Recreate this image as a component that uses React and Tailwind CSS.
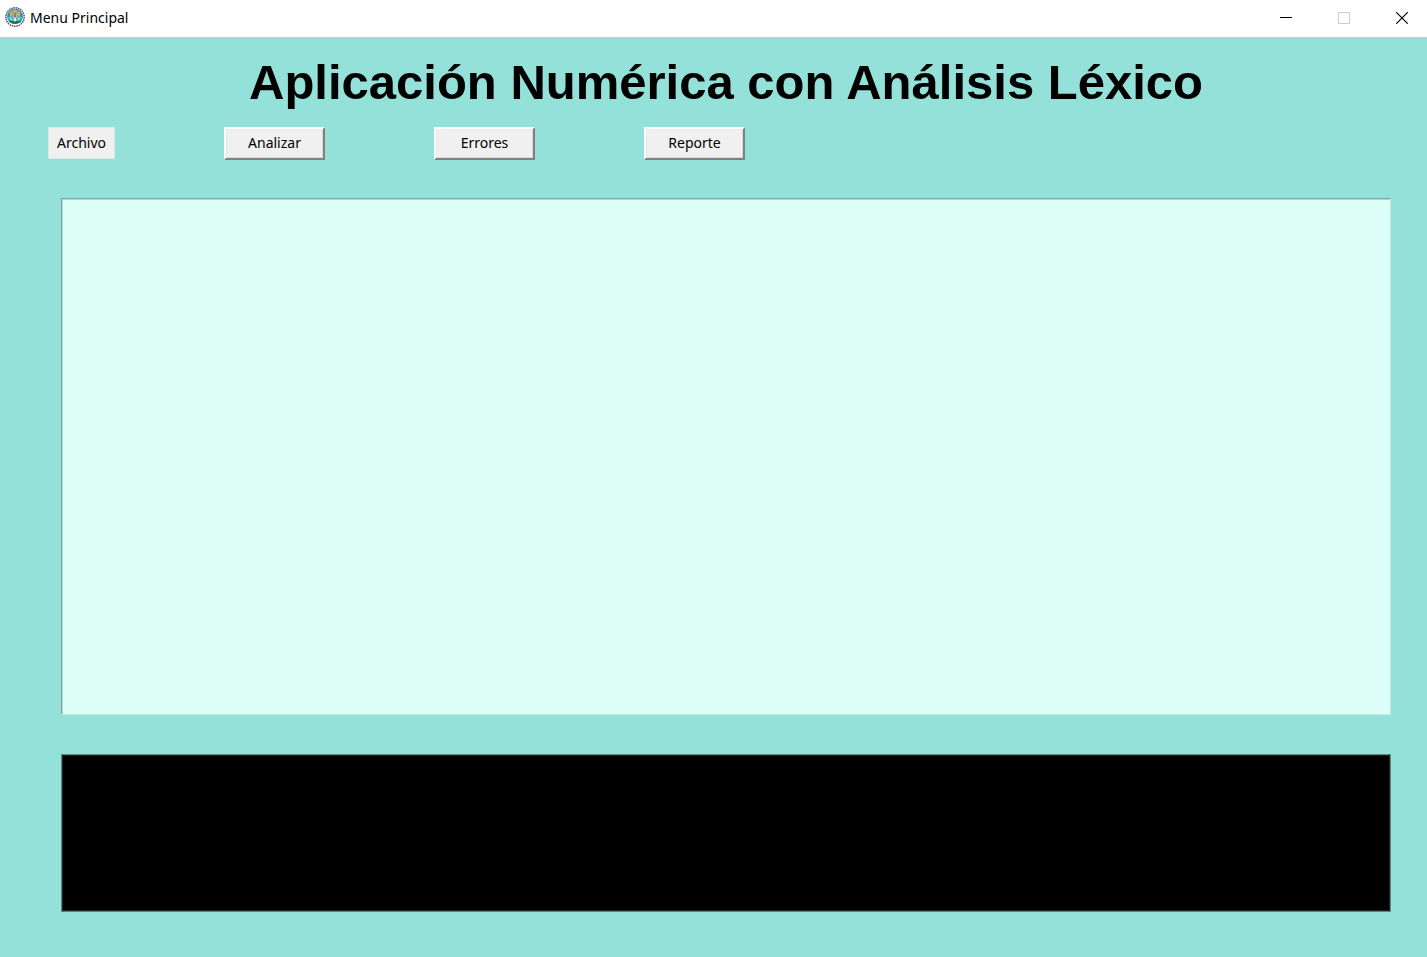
function CrestIcon() {
  return (
    <svg viewBox="0 0 20 20" className="size-5 shrink-0" aria-hidden="true">
      <circle cx="10" cy="10" r="9.2" fill="#eef0ee" stroke="#4f5552" strokeWidth="1.5" strokeDasharray="1.5 0.8" />
      <circle cx="10" cy="9.6" r="7.8" fill="#2b86bd" />
      <path d="M4.2 5.5a7.4 7.4 0 0 1 11.6 0L14 8H6z" fill="#8fa9a4" />
      <path d="M2.4 10.5 5 9l5 1 5-1 2.6 1.5a7.6 7.6 0 0 1-2.6 4.2L10 14l-5 .7a7.6 7.6 0 0 1-2.6-4.2z" fill="#3fb3d6" />
      <path d="M3.4 13.4 6.6 14l3.4-.6 3.4.6 3.2-.6a7.6 7.6 0 0 1-13.2 0z" fill="#23704a" />
      <path d="M9 2.4h2.2v3.4H9zM4.8 5.6h2v3.6h-2zM13.2 5.6h2v3.6h-2zM7.6 7.4h1.6v3.8H7.6zM11 7.4h1.6v3.8H11z" fill="#e3b04a" />
      <path d="M9.3 5.5h1.5v4H9.3z" fill="#c06a35" />
      <path d="M5.8 9.8 7.6 14l-2.4-2.4zM14.2 9.8 12.4 14l2.4-2.4zM9.2 10.6h1.6l.6 3.6H8.6z" fill="#d6f1f8" />
      <path d="M4.4 16q5.6 3.2 11.2 0" fill="none" stroke="#fff" strokeWidth="1.4" />
    </svg>
  );
}

const windowButton = "flex h-9 w-[58px] items-center justify-center";

function TitleBar() {
  return (
    <header className="flex h-[37px] items-center justify-between bg-white">
      <div className="flex items-center gap-[5px] pl-[5px] pb-[3px]">
        <CrestIcon />
        <span className="pt-[2px] font-['Noto_Sans',sans-serif] text-sm text-black">Menu Principal</span>
      </div>
      <div className="flex -mr-1 pb-[2px]">
        <button type="button" aria-label="Minimizar" className={windowButton}>
          <svg viewBox="0 0 12 12" className="size-3" shapeRendering="crispEdges">
            <path d="M0 5.5h12" stroke="#000" />
          </svg>
        </button>
        <button type="button" aria-label="Maximizar" disabled className={windowButton}>
          <svg viewBox="0 0 12 12" className="size-3" shapeRendering="crispEdges">
            <path d="M.5.5h11v11H.5z" fill="none" stroke="#ccc" />
          </svg>
        </button>
        <button type="button" aria-label="Cerrar" className={windowButton}>
          <svg viewBox="0 0 12 12" className="size-3">
            <path d="M.3.3l11.4 11.4M11.7.3.3 11.7" stroke="#000" strokeWidth="1.2" />
          </svg>
        </button>
      </div>
    </header>
  );
}

function ActionButton({ children }) {
  return (
    <button
      type="button"
      className="h-[33px] w-[101px] border-2 border-t-white border-l-white border-r-[#808080] border-b-[#808080] bg-[#f0f0f0] pb-px shadow-[inset_1px_1px_0_#e8e8e8,inset_-1px_-1px_0_#d8d8d8]"
    >
      {children}
    </button>
  );
}

export default function App() {
  return (
    <div className="flex min-h-screen flex-col bg-[#94e1d9]">
      <TitleBar />
      <main className="flex flex-1 flex-col pt-4 pr-9 pb-[45px] pl-12">
        <h1 className="ml-[13px] text-center font-['Liberation_Sans',Arial,sans-serif] text-[49px] leading-[58px] font-bold text-black">
          Aplicación Numérica con Análisis Léxico
        </h1>
        <nav className="mt-4 flex items-start gap-[109px] font-['Noto_Sans',sans-serif] text-sm text-black">
          <button type="button" className="h-8 w-[67px] border border-[#d5ebe7] bg-[#f0f0f0]">
            Archivo
          </button>
          <ActionButton>Analizar</ActionButton>
          <ActionButton>Errores</ActionButton>
          <ActionButton>Reporte</ActionButton>
        </nav>
        <textarea
          aria-label="Editor"
          className="mt-[38px] ml-[13px] min-h-40 flex-1 resize-none border border-t-[#7fa8a2] border-r-[#c5e9e1] border-b-[#c5e9e1] border-l-[#7fa8a2] bg-[#defff8] p-1 font-['Liberation_Mono',monospace] text-sm shadow-[inset_1px_1px_0_#b5d5cf] outline-none"
        />
        <textarea
          aria-label="Consola"
          readOnly
          className="mt-[39px] ml-[13px] h-[158px] resize-none border border-[#5f8580] bg-black p-1 font-['Liberation_Mono',monospace] text-sm text-white shadow-[inset_0_0_0_1px_#222] outline-none"
        />
      </main>
    </div>
  );
}
